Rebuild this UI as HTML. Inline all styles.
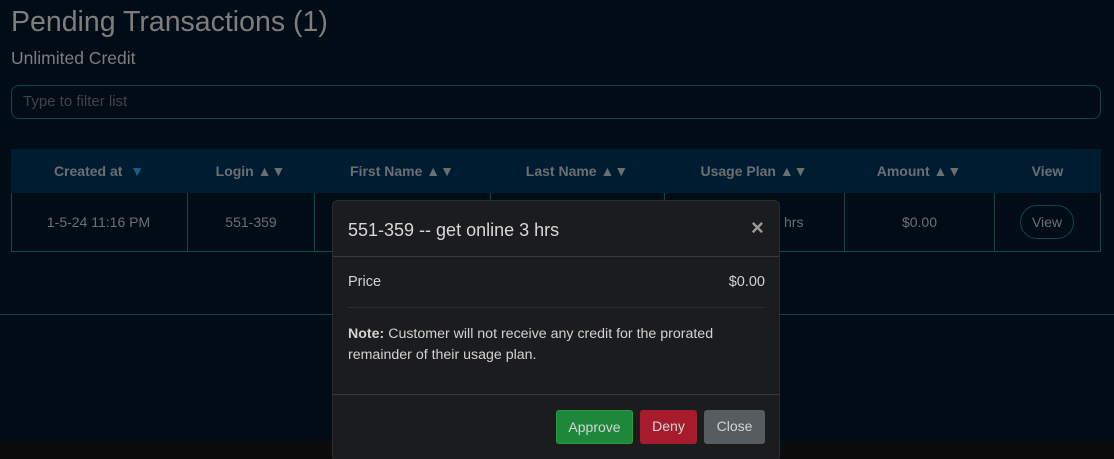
<!DOCTYPE html>
<html><head><style>
*{margin:0;padding:0;box-sizing:border-box}
html,body{width:1114px;height:459px;overflow:hidden}
body{background:#020c16;font-family:"Liberation Sans",sans-serif;position:relative;color:#8a8a8a}
.a{position:absolute}
h1{position:absolute;left:11px;top:6px;font-size:28.5px;font-weight:normal;color:#7d7d7d}
.sub{left:11px;top:48px;font-size:17.5px;color:#7d7d7d}
.inp{left:11px;top:85px;width:1090px;height:34px;border:1px solid #0d4a44;border-radius:8px;font-size:15px;color:#3f4448;padding:7px 11px}
.th{top:149px;left:11px;width:1090px;height:44px;background:#001c30}
.c{position:absolute;text-align:center;font-size:14px;font-weight:bold;color:#6b6f73;top:14px}
.row{top:193px;left:11px;width:1090px;height:59px;border:1px solid #0d4a44;border-top:none}
.v{position:absolute;top:0;width:1px;height:58px;background:#0d4a44}
.td{position:absolute;top:21px;font-size:14px;color:#6b6f73;text-align:center}
.blue{color:#1f5a80}
.modal{left:332px;top:200px;width:448px;height:262px;background:#1b1c1e;border:1px solid #2c2d30;border-radius:6px;color:#d2d2d2}
.btn{position:absolute;top:209px;height:34px;border-radius:3px;font-size:14px;color:#cfd8d3;text-align:center;line-height:32px}
</style></head><body>
<h1>Pending Transactions (1)</h1>
<div class="a sub">Unlimited Credit</div>
<div class="a inp">Type to filter list</div>
<div class="a th">
<div class="c" style="left:0;width:176px">Created at &nbsp;<span class="blue">▼</span></div>
<div class="c" style="left:176px;width:127px">Login ▲▼</div>
<div class="c" style="left:303px;width:176px">First Name ▲▼</div>
<div class="c" style="left:479px;width:174px">Last Name ▲▼</div>
<div class="c" style="left:653px;width:180px">Usage Plan ▲▼</div>
<div class="c" style="left:833px;width:150px">Amount ▲▼</div>
<div class="c" style="left:983px;width:107px">View</div>
</div>
<div class="a row">
<div class="v" style="left:175px"></div><div class="v" style="left:302px"></div><div class="v" style="left:478px"></div><div class="v" style="left:652px"></div><div class="v" style="left:832px"></div><div class="v" style="left:982px"></div>
<div class="td" style="left:-1px;width:175px">1-5-24 11:16 PM</div>
<div class="td" style="left:176px;width:126px">551-359</div>
<div class="td" style="left:772px;top:21px">hrs</div>
<div class="td" style="left:833px;width:149px">$0.00</div>
<div style="position:absolute;left:1008px;top:12px;width:54px;height:34px;border:1px solid #0d4a44;border-radius:17px;font-size:14px;color:#6b6f73;text-align:center;line-height:32px">View</div>
</div>
<div class="a" style="left:0;top:314px;width:1114px;height:1px;background:#0d4a44"></div>
<div class="a" style="left:0;top:440px;width:1114px;height:19px;background:#0a0b0a"></div>
<div class="a modal">
<div class="a" style="left:15px;top:19px;font-size:18px;color:#d8d8d8">551-359 -- get online 3 hrs</div>
<div class="a" style="left:418px;top:14px;font-size:22px;font-weight:bold;color:#9a9a9a">×</div>
<div class="a" style="left:0;top:55px;width:446px;height:1px;background:#3a3b3e"></div>
<div class="a" style="left:15px;top:73px;font-size:14.5px">Price</div>
<div class="a" style="right:14px;top:73px;font-size:14.5px">$0.00</div>
<div class="a" style="left:15px;top:106px;width:417px;height:1px;background:#2c2d30"></div>
<div class="a" style="left:15px;top:123px;width:400px;font-size:14.2px;line-height:21px"><b>Note:</b> Customer will not receive any credit for the prorated remainder of their usage plan.</div>
<div class="a" style="left:0;top:193px;width:446px;height:1px;background:#3a3b3e"></div>
<div class="btn" style="left:223px;width:77px;background:#1f873a;border:1px solid #2a9a45">Approve</div>
<div class="btn" style="left:307px;width:57px;background:#a61c2c">Deny</div>
<div class="btn" style="left:371px;width:61px;background:#565c60">Close</div>
</div>
</body></html>
